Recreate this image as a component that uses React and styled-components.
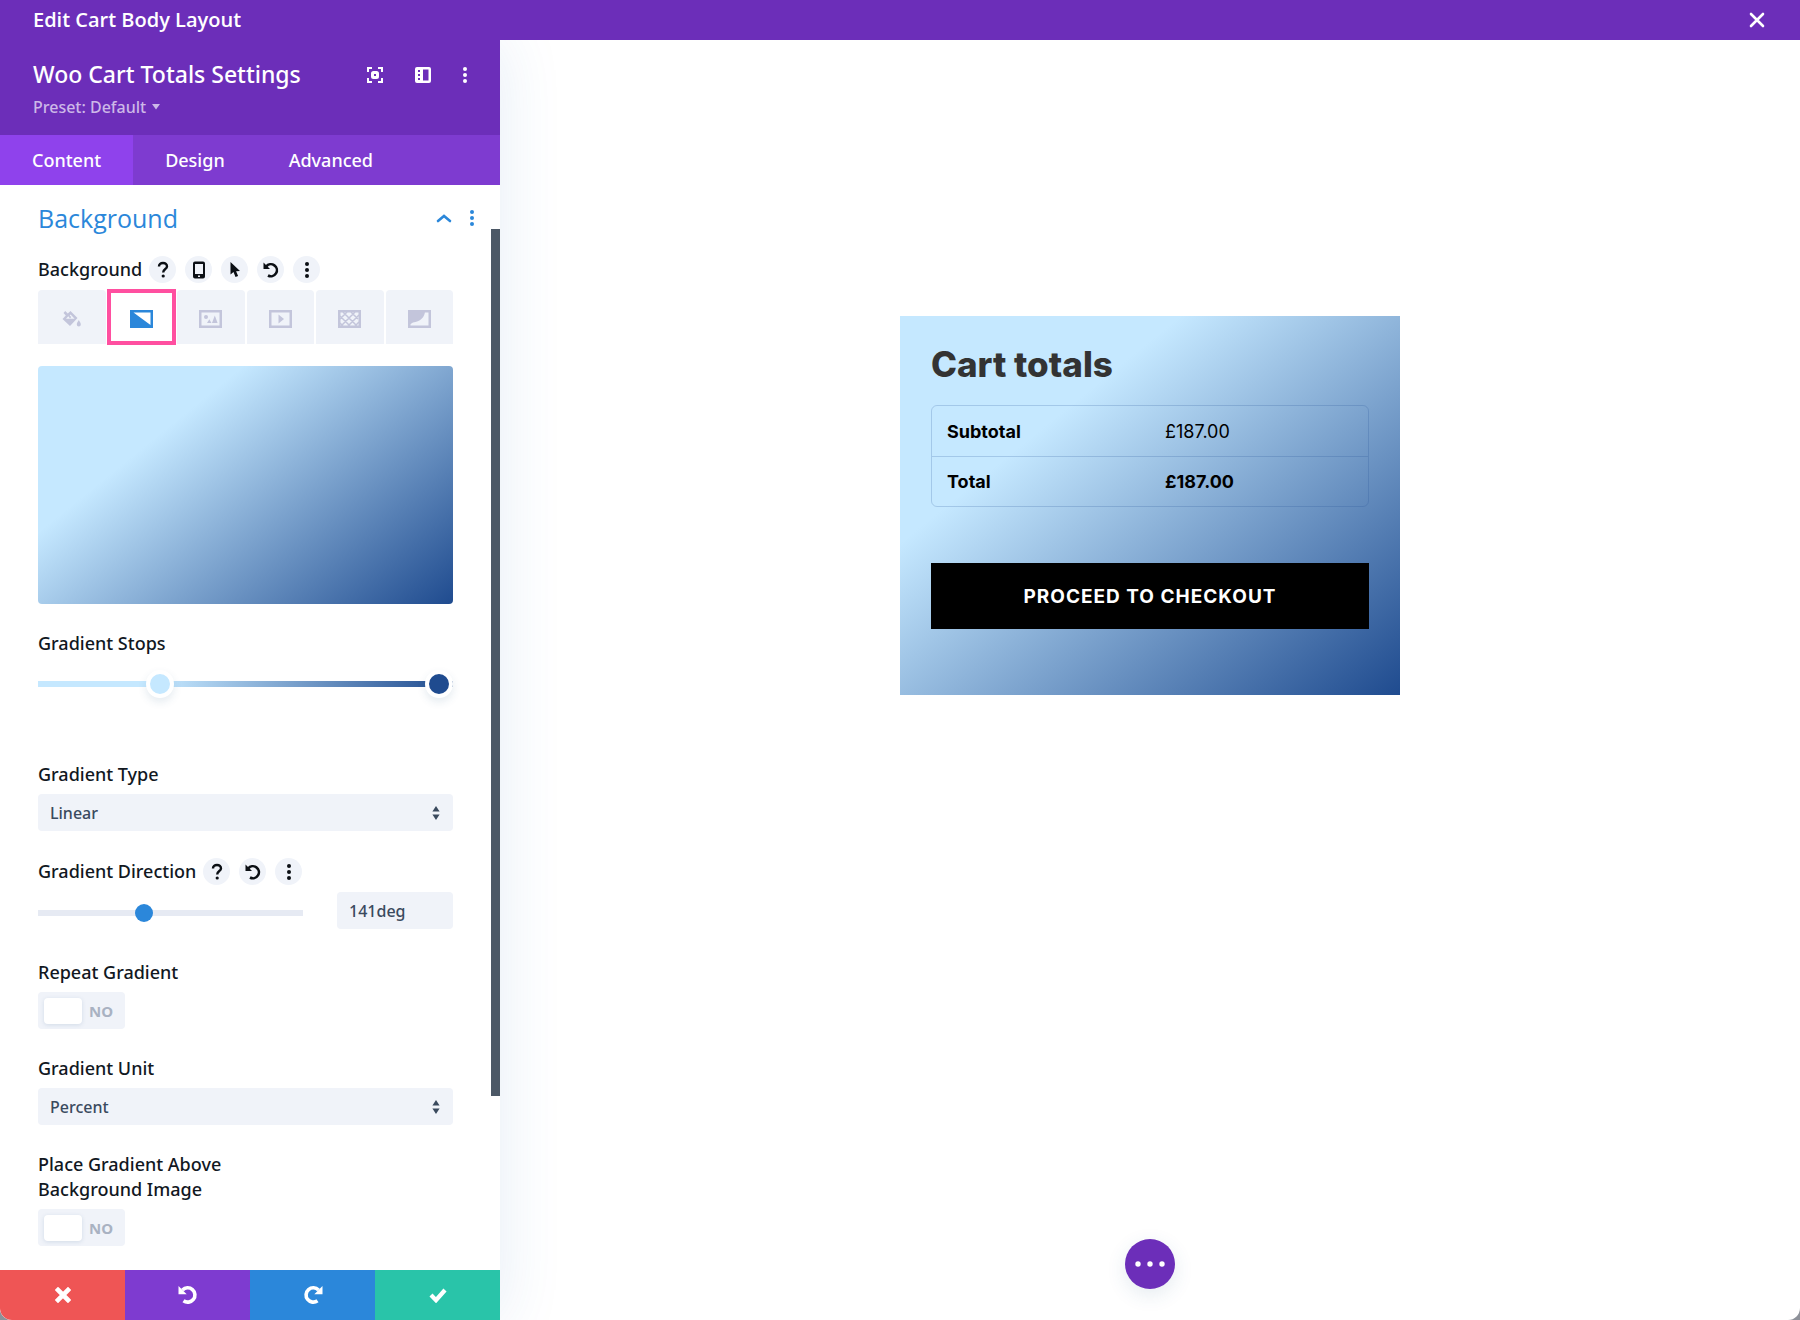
import { useState } from "react";
import styled, { createGlobalStyle, css } from "styled-components";

const GRADIENT_STOPS = "#c5e8ff 29%, #1f4b8f 100%";

const HelpIcon = () => (
  <svg width="14" height="18" viewBox="0 0 14 18" fill="none" aria-hidden="true">
    <path
      d="M3 5.6C3 3.4 4.6 2 7 2s4 1.4 4 3.5C11 8.2 7.2 8 7.2 11.5"
      stroke="currentColor"
      strokeWidth="2.4"
    />
    <circle cx="7.2" cy="15" r="1.6" fill="currentColor" />
  </svg>
);

const PhoneIcon = () => (
  <svg width="14" height="18" viewBox="0 0 14 18" aria-hidden="true">
    <path
      fillRule="evenodd"
      fill="currentColor"
      d="M3 .5h8a2 2 0 0 1 2 2v13a2 2 0 0 1-2 2H3a2 2 0 0 1-2-2v-13a2 2 0 0 1 2-2zM3 3v10h8V3zM6 14.5V16h2v-1.5z"
    />
  </svg>
);

const PointerIcon = () => (
  <svg width="12" height="18" viewBox="0 0 12 18" aria-hidden="true">
    <path fill="currentColor" d="M1.5 1v12.5l3-2.5 2 5 2.6-1.1-2-4.7 3.9-.3z" />
  </svg>
);

const ResetIcon = () => (
  <svg width="18" height="18" viewBox="0 0 18 18" fill="none" aria-hidden="true">
    <path d="M4.2 5.5A6 6 0 1 1 6 14.5" stroke="currentColor" strokeWidth="2.6" />
    <path d="M1.5 1.5V8H8z" fill="currentColor" />
  </svg>
);

const DotsIcon = () => (
  <svg width="6" height="18" viewBox="0 0 6 18" fill="currentColor" aria-hidden="true">
    <circle cx="3" cy="3" r="2" />
    <circle cx="3" cy="9" r="2" />
    <circle cx="3" cy="15" r="2" />
  </svg>
);

const FocusIcon = () => (
  <svg width="18" height="18" viewBox="0 0 18 18" fill="none" aria-hidden="true">
    <path d="M2 6V2h4M12 2h4v4M16 12v4h-4M6 16H2v-4" stroke="currentColor" strokeWidth="2" />
    <rect x="6.5" y="6.5" width="5" height="5" rx="1" stroke="currentColor" strokeWidth="3" />
  </svg>
);

const LayoutIcon = () => (
  <svg width="16" height="16" viewBox="0 0 16 16" aria-hidden="true">
    <path
      fillRule="evenodd"
      fill="currentColor"
      d="M2 0h12a2 2 0 0 1 2 2v12a2 2 0 0 1-2 2H2a2 2 0 0 1-2-2V2a2 2 0 0 1 2-2zM8 2.5v11h5.5v-11zM3 3v2h2V3zM3 7v2h2V7zM3 11v2h2v-2z"
    />
  </svg>
);

const ChevronIcon = () => (
  <svg width="16" height="10" viewBox="0 0 16 10" fill="none" aria-hidden="true">
    <path d="M2 8l6-5 6 5" stroke="currentColor" strokeWidth="2.6" strokeLinecap="round" />
  </svg>
);

const CaretIcon = () => (
  <svg width="8" height="6" viewBox="0 0 8 6" aria-hidden="true">
    <path d="M0 0h8L4 5.5z" fill="currentColor" />
  </svg>
);

const SelectArrows = () => (
  <svg width="8" height="16" viewBox="0 0 8 16" aria-hidden="true">
    <path d="M4 1l3.6 5.5H.4zM4 15L.4 9.5h7.2z" fill="currentColor" />
  </svg>
);

const CloseIcon = () => (
  <svg width="16" height="16" viewBox="0 0 16 16" fill="none" aria-hidden="true">
    <path d="M2 2l12 12M14 2L2 14" stroke="currentColor" strokeWidth="2.6" strokeLinecap="round" />
  </svg>
);

const FillIcon = () => (
  <svg width="19" height="18" viewBox="0 0 19 18" aria-hidden="true">
    <path
      fillRule="evenodd"
      fill="currentColor"
      d="M3.2 1l2.6 2.6L8.5 1l7 7-7.5 8-7.5-7 3.3-3.4L1.5 3zM6.3 6.2L4 8.8h8.6L8.6 4.6l-.9.9 1.6 1.6-1.3 1.3z"
    />
    <path fill="currentColor" d="M16.8 10c1.3 2.2 2 3.3 2 4.5a2 2 0 0 1-4 0c0-1.2.7-2.3 2-4.5z" />
  </svg>
);

const GradientIcon = () => (
  <svg width="23" height="18" viewBox="0 0 23 18" aria-hidden="true">
    <path fillRule="evenodd" fill="currentColor" d="M0 0h23v18H0zM3.5 2.5L20.5 15V2.5z" />
  </svg>
);

const Frame = ({ children }) => (
  <svg width="23" height="18" viewBox="0 0 23 18" fill="none" aria-hidden="true">
    <rect x="1.25" y="1.25" width="20.5" height="15.5" stroke="currentColor" strokeWidth="2.5" />
    {children}
  </svg>
);

const ImageIcon = () => (
  <Frame>
    <circle cx="7" cy="7" r="2" fill="currentColor" />
    <path d="M8 13l2.3-3.7 2.2 3.7zM13 13l2.8-7.5L18.6 13z" fill="currentColor" />
  </Frame>
);

const VideoIcon = () => (
  <Frame>
    <path d="M9.5 4.5L15 9l-5.5 4.5z" fill="currentColor" />
  </Frame>
);

const PatternIcon = () => (
  <Frame>
    <path
      d="M2 9l7-7M3 16L17 2M10 16L21 5M17 16l4-4M20 9l-7-7M19 16L5 2M12 16L2 6M5 16l-3-3"
      stroke="currentColor"
      strokeWidth="1.5"
    />
  </Frame>
);

const MaskIcon = () => (
  <Frame>
    <path d="M1 1h16c0 6-5 11-12 11.5L1 15z" fill="currentColor" />
  </Frame>
);

const CancelIcon = () => (
  <svg width="16" height="16" viewBox="0 0 16 16" fill="none" aria-hidden="true">
    <path d="M3 3l10 10M13 3L3 13" stroke="currentColor" strokeWidth="4.6" strokeLinecap="square" />
  </svg>
);

const UndoIcon = () => (
  <svg width="20" height="20" viewBox="0 0 20 20" fill="none" aria-hidden="true">
    <path d="M4.5 5A7.2 7.2 0 1 1 5.5 15.8" stroke="currentColor" strokeWidth="3.6" />
    <path d="M.5 1v8.2h8.2z" fill="currentColor" />
  </svg>
);

const RedoIcon = () => (
  <svg width="20" height="20" viewBox="0 0 20 20" fill="none" aria-hidden="true">
    <path d="M15.5 5A7.2 7.2 0 1 0 14.5 15.8" stroke="currentColor" strokeWidth="3.6" />
    <path d="M19.5 1v8.2h-8.2z" fill="currentColor" />
  </svg>
);

const CheckIcon = () => (
  <svg width="18" height="16" viewBox="0 0 18 16" fill="none" aria-hidden="true">
    <path d="M2 8l5 5.2L16 3" stroke="currentColor" strokeWidth="4.2" />
  </svg>
);

const settingsTabs = ["Content", "Design", "Advanced"];

const backgroundTypes = [
  { id: "color", label: "Color", icon: <FillIcon /> },
  { id: "gradient", label: "Gradient", icon: <GradientIcon /> },
  { id: "image", label: "Image", icon: <ImageIcon /> },
  { id: "video", label: "Video", icon: <VideoIcon /> },
  { id: "pattern", label: "Pattern", icon: <PatternIcon /> },
  { id: "mask", label: "Mask", icon: <MaskIcon /> },
];

const backgroundTools = [
  { label: "Help", icon: <HelpIcon /> },
  { label: "Responsive", icon: <PhoneIcon /> },
  { label: "Hover", icon: <PointerIcon /> },
  { label: "Reset", icon: <ResetIcon /> },
  { label: "More", icon: <DotsIcon /> },
];

const directionTools = [
  { label: "Help", icon: <HelpIcon /> },
  { label: "Reset", icon: <ResetIcon /> },
  { label: "More", icon: <DotsIcon /> },
];

const footerActions = [
  { label: "Discard", color: "#ef5555", icon: <CancelIcon /> },
  { label: "Undo", color: "#7e3bd0", icon: <UndoIcon /> },
  { label: "Redo", color: "#2b87da", icon: <RedoIcon /> },
  { label: "Save", color: "#29c4a9", icon: <CheckIcon /> },
];

const Tools = ({ items }) => (
  <ToolList>
    {items.map((tool) => (
      <ToolButton key={tool.label} type="button" aria-label={tool.label}>
        {tool.icon}
      </ToolButton>
    ))}
  </ToolList>
);

const SelectField = ({ id, label, options }) => (
  <Field>
    <Label htmlFor={id}>{label}</Label>
    <SelectWrapper>
      <Select id={id}>
        {options.map((option) => (
          <option key={option}>{option}</option>
        ))}
      </Select>
      <SelectArrows />
    </SelectWrapper>
  </Field>
);

const ToggleField = ({ id, label }) => {
  const [on, setOn] = useState(false);

  return (
    <Field>
      <Label htmlFor={id}>{label}</Label>
      <Toggle $on={on}>
        <ToggleInput
          id={id}
          type="checkbox"
          checked={on}
          onChange={(e) => setOn(e.target.checked)}
        />
        <span>{on ? "YES" : "NO"}</span>
      </Toggle>
    </Field>
  );
};

const SettingsPanel = () => {
  const [tab, setTab] = useState("Content");
  const [type, setType] = useState("gradient");
  const [direction, setDirection] = useState(141);

  return (
    <Panel>
      <PanelHeader>
        <TitleRow>
          <PanelTitle>Woo Cart Totals Settings</PanelTitle>
          <HeaderActions>
            <IconButton type="button" aria-label="Expand">
              <FocusIcon />
            </IconButton>
            <IconButton type="button" aria-label="Dock">
              <LayoutIcon />
            </IconButton>
            <IconButton type="button" aria-label="More">
              <DotsIcon />
            </IconButton>
          </HeaderActions>
        </TitleRow>
        <PresetButton type="button">
          Preset: Default <CaretIcon />
        </PresetButton>
      </PanelHeader>

      <Tabs>
        {settingsTabs.map((name) => (
          <Tab key={name} type="button" $active={tab === name} onClick={() => setTab(name)}>
            {name}
          </Tab>
        ))}
      </Tabs>

      <PanelBody>
        <Options>
          <SectionHeader>
            <SectionTitle>Background</SectionTitle>
            <SectionActions>
              <IconButton type="button" aria-label="Collapse">
                <ChevronIcon />
              </IconButton>
              <IconButton type="button" aria-label="Section options">
                <DotsIcon />
              </IconButton>
            </SectionActions>
          </SectionHeader>

          <Field>
            <LabelRow>
              <Label as="span">Background</Label>
              <Tools items={backgroundTools} />
            </LabelRow>
            <TypeTabs>
              {backgroundTypes.map((item) => (
                <TypeTab
                  key={item.id}
                  type="button"
                  aria-label={item.label}
                  $active={type === item.id}
                  onClick={() => setType(item.id)}
                >
                  {item.icon}
                </TypeTab>
              ))}
            </TypeTabs>
            <Preview />
          </Field>

          <StopsField>
            <Label htmlFor="stop-start">Gradient Stops</Label>
            <StopsTrack>
              <StopRange id="stop-start" type="range" defaultValue="28" $color="#c5e8ff" />
              <StopRange aria-label="End stop" type="range" defaultValue="100" $color="#1f4b8f" />
            </StopsTrack>
          </StopsField>

          <SelectField
            id="gradient-type"
            label="Gradient Type"
            options={["Linear", "Circular", "Elliptical", "Conical"]}
          />

          <DirectionField>
            <LabelRow>
              <Label htmlFor="direction">Gradient Direction</Label>
              <Tools items={directionTools} />
            </LabelRow>
            <RangeRow>
              <Range
                id="direction"
                type="range"
                min="0"
                max="360"
                value={direction}
                onChange={(e) => setDirection(Number(e.target.value))}
              />
              <TextInput
                aria-label="Gradient direction value"
                value={`${direction}deg`}
                onChange={(e) => setDirection(parseInt(e.target.value, 10) || 0)}
              />
            </RangeRow>
          </DirectionField>

          <ToggleField id="repeat" label="Repeat Gradient" />
          <SelectField id="unit" label="Gradient Unit" options={["Percent", "Pixels"]} />
          <ToggleField id="above" label="Place Gradient Above Background Image" />
        </Options>
        <ScrollTrack>
          <ScrollThumb />
        </ScrollTrack>
      </PanelBody>

      <PanelFooter>
        {footerActions.map((action) => (
          <FooterButton
            key={action.label}
            type="button"
            aria-label={action.label}
            $color={action.color}
          >
            {action.icon}
          </FooterButton>
        ))}
      </PanelFooter>
    </Panel>
  );
};

const CartTotals = () => (
  <Card>
    <CardTitle>Cart totals</CardTitle>
    <TotalsTable>
      <tbody>
        <tr>
          <th scope="row">Subtotal</th>
          <td>£187.00</td>
        </tr>
        <tr>
          <th scope="row">Total</th>
          <td>
            <strong>£187.00</strong>
          </td>
        </tr>
      </tbody>
    </TotalsTable>
    <CheckoutButton type="button">PROCEED TO CHECKOUT</CheckoutButton>
  </Card>
);

export default function App() {
  return (
    <>
      <GlobalStyle />
      <Window>
        <TopBar>
          <TopTitle>Edit Cart Body Layout</TopTitle>
          <IconButton type="button" aria-label="Close">
            <CloseIcon />
          </IconButton>
        </TopBar>
        <Workspace>
          <SettingsPanel />
          <Canvas>
            <CartTotals />
            <MoreButton type="button" aria-label="Page options">
              <svg width="30" height="6" viewBox="0 0 30 6" fill="currentColor" aria-hidden="true">
                <circle cx="3" cy="3" r="2.7" />
                <circle cx="15" cy="3" r="2.7" />
                <circle cx="27" cy="3" r="2.7" />
              </svg>
            </MoreButton>
          </Canvas>
        </Workspace>
      </Window>
    </>
  );
}

const GlobalStyle = createGlobalStyle`
  * {
    box-sizing: border-box;
  }

  body {
    margin: 0;
    background: #8d9199;
    font-family: "Noto Sans", "Open Sans", sans-serif;
    color: #20292f;
  }

  button,
  input,
  select {
    font-family: inherit;
    margin: 0;
  }

  button {
    border: 0;
    padding: 0;
    cursor: pointer;
  }

  svg {
    display: block;
    flex-shrink: 0;
  }
`;

const Window = styled.div`
  display: flex;
  flex-direction: column;
  min-height: 100vh;
  background: #ffffff;
  border-radius: 0 0 12px 12px;
  overflow: hidden;
`;

const TopBar = styled.header`
  display: flex;
  align-items: center;
  justify-content: space-between;
  height: 40px;
  padding: 0 35px 0 33px;
  background: #6c2eb9;
  color: #ffffff;
`;

const TopTitle = styled.h1`
  margin: 0;
  font-family: "Open Sans", sans-serif;
  font-size: 20px;
  font-weight: 600;
  line-height: 26px;
`;

const IconButton = styled.button`
  display: flex;
  background: none;
  color: inherit;
`;

const Workspace = styled.div`
  flex: 1;
  display: flex;
`;

const Panel = styled.aside`
  flex: 0 0 500px;
  display: flex;
  flex-direction: column;
  background: #ffffff;
  box-shadow: 0 0 60px rgba(43, 110, 180, 0.12);
  clip-path: inset(0 -100px 0 0);
`;

const PanelHeader = styled.div`
  height: 95px;
  padding: 18px 32px 0 33px;
  background: #6c2eb9;
  color: #ffffff;
`;

const TitleRow = styled.div`
  display: flex;
  align-items: center;
  justify-content: space-between;
`;

const PanelTitle = styled.h2`
  margin: 0;
  font-size: 23px;
  font-weight: 500;
  line-height: 33px;
`;

const HeaderActions = styled.div`
  display: flex;
  align-items: center;
  gap: 31px;
`;

const PresetButton = styled.button`
  display: flex;
  align-items: center;
  gap: 6px;
  height: 32px;
  background: none;
  color: #cdb8e8;
  font-size: 16px;
  font-weight: 500;
`;

const Tabs = styled.nav`
  display: flex;
  height: 50px;
  background: #7e3bd0;
`;

const Tab = styled.button`
  padding: 0 32px;
  background: ${(p) => (p.$active ? "#8f42ec" : "transparent")};
  color: #ffffff;
  font-size: 18px;
  font-weight: 500;
`;

const PanelBody = styled.div`
  flex: 1;
  display: flex;
`;

const Options = styled.div`
  flex: 1;
  display: flex;
  flex-direction: column;
  gap: 27px;
  padding: 13px 38px 20px;
`;

const SectionHeader = styled.div`
  display: flex;
  align-items: center;
  justify-content: space-between;
  height: 40px;
  margin: 0 -22px -9px 0;
  color: #2b87da;
`;

const SectionTitle = styled.h3`
  margin: 0;
  font-family: "Open Sans", sans-serif;
  font-size: 25px;
  font-weight: 400;
`;

const SectionActions = styled.div`
  display: flex;
  align-items: center;
  gap: 17px;
`;

const Field = styled.div`
  display: flex;
  flex-direction: column;
  gap: 7px;
`;

const StopsField = styled(Field)`
  gap: 14px;
  padding-bottom: 37px;
`;

const DirectionField = styled(Field)`
  padding-bottom: 4px;
`;

const LabelRow = styled.div`
  display: flex;
  align-items: center;
  gap: 7px;
`;

const ToolList = styled.div`
  display: flex;
  gap: 9px;
`;

const Label = styled.label`
  max-width: 220px;
  color: #12181f;
  font-size: 18px;
  font-weight: 500;
  line-height: 25px;
`;

const ToolButton = styled.button`
  display: flex;
  align-items: center;
  justify-content: center;
  width: 27px;
  height: 27px;
  border-radius: 50%;
  background: #f0f3f9;
  color: #0b0f14;
`;

const TypeTabs = styled.div`
  display: grid;
  grid-template-columns: repeat(6, 1fr);
  gap: 2px;
`;

const TypeTab = styled.button`
  display: flex;
  align-items: center;
  justify-content: center;
  height: 54px;
  padding-top: 4px;
  border-radius: 4px 4px 0 0;
  background: #f0f3f9;
  color: #c3c5db;

  ${(p) =>
    p.$active &&
    css`
      background: #ffffff;
      color: #2b87da;
      border-radius: 0;
      outline: 4px solid #ff4fa0;
      outline-offset: -3px;
    `}
`;

const Preview = styled.div`
  height: 238px;
  margin-top: 15px;
  border-radius: 4px;
  background: linear-gradient(141deg, ${GRADIENT_STOPS});
`;

const StopsTrack = styled.div`
  display: grid;
  height: 28px;
  background: linear-gradient(90deg, ${GRADIENT_STOPS}) center / 100% 6px no-repeat;
`;

const StopRange = styled.input`
  grid-area: 1 / 1;
  width: 100%;
  height: 28px;
  background: none;
  appearance: none;
  pointer-events: none;

  &::-webkit-slider-thumb {
    appearance: none;
    width: 28px;
    height: 28px;
    border: 4px solid #ffffff;
    border-radius: 50%;
    background: ${(p) => p.$color};
    box-shadow: 0 4px 8px rgba(43, 87, 135, 0.12);
    pointer-events: auto;
  }
`;

const RangeRow = styled.div`
  display: grid;
  grid-template-columns: 16fr 7fr;
  align-items: center;
  gap: 34px;
`;

const Range = styled.input`
  width: 100%;
  height: 18px;
  margin-top: 4px;
  appearance: none;
  background: linear-gradient(#e6eaf3, #e6eaf3) center / 100% 6px no-repeat;

  &::-webkit-slider-thumb {
    appearance: none;
    width: 18px;
    height: 18px;
    border-radius: 50%;
    background: #2b87da;
  }
`;

const controlStyle = css`
  width: 100%;
  height: 37px;
  padding: 0 12px;
  border: 0;
  border-radius: 4px;
  background: #f0f3f9;
  color: #3a4a5e;
  font-size: 16px;
  font-weight: 500;
`;

const TextInput = styled.input`
  ${controlStyle}
`;

const SelectWrapper = styled.div`
  display: grid;
  align-items: center;
  color: #3a4a5e;

  > * {
    grid-area: 1 / 1;
  }

  svg {
    justify-self: end;
    margin-right: 13px;
    pointer-events: none;
  }
`;

const Select = styled.select`
  ${controlStyle}
  appearance: none;
`;

const Toggle = styled.div`
  display: flex;
  flex-direction: ${(p) => (p.$on ? "row-reverse" : "row")};
  align-items: center;
  justify-content: space-between;
  width: 87px;
  height: 37px;
  padding: 0 12px 0 6px;
  border-radius: 4px;
  background: #f0f3f9;
  color: #a9b2c2;
  font-size: 15px;
  font-weight: 700;
`;

const ToggleInput = styled.input`
  appearance: none;
  width: 38px;
  height: 26px;
  border-radius: 4px;
  background: #ffffff;
  box-shadow: 0 1px 4px rgba(43, 87, 135, 0.15);
`;

const ScrollTrack = styled.div`
  display: flex;
  width: 9px;
  padding: 44px 0 174px;
`;

const ScrollThumb = styled.div`
  flex: 1;
  background: #4c5866;
`;

const PanelFooter = styled.footer`
  display: grid;
  grid-template-columns: repeat(4, 1fr);
  height: 50px;
`;

const FooterButton = styled.button`
  display: flex;
  align-items: center;
  justify-content: center;
  background: ${(p) => p.$color};
  color: #ffffff;
`;

const Canvas = styled.main`
  flex: 1;
  display: flex;
  flex-direction: column;
  align-items: center;
  padding: 276px 40px 31px;
`;

const Card = styled.section`
  width: 100%;
  max-width: 500px;
  padding: 26px 31px 66px;
  background: linear-gradient(141deg, ${GRADIENT_STOPS});
  font-family: Inter, "Open Sans", sans-serif;
`;

const CardTitle = styled.h2`
  margin: 0 0 19px;
  color: #333333;
  font-size: 35px;
  font-weight: 800;
  line-height: 44px;
`;

const TotalsTable = styled.table`
  width: 100%;
  border: 1px solid rgba(31, 75, 143, 0.2);
  border-radius: 6px;
  border-spacing: 0;
  table-layout: fixed;
  color: #000000;
  font-size: 18px;

  th,
  td {
    height: 50px;
    padding: 0 15px;
    text-align: left;
  }

  th {
    width: 50%;
    font-weight: 700;
  }

  td {
    font-weight: 400;
  }

  tr + tr > * {
    border-top: 1px solid rgba(31, 75, 143, 0.2);
  }
`;

const CheckoutButton = styled.button`
  width: 100%;
  height: 66px;
  margin-top: 56px;
  background: #000000;
  color: #ffffff;
  font-family: inherit;
  font-size: 19px;
  font-weight: 700;
  letter-spacing: 1px;
`;

const MoreButton = styled.button`
  display: flex;
  align-items: center;
  justify-content: center;
  width: 50px;
  height: 50px;
  margin-top: auto;
  border-radius: 50%;
  background: #6c2eb9;
  color: #ffffff;
  box-shadow: 0 6px 20px rgba(43, 87, 135, 0.12);
`;
